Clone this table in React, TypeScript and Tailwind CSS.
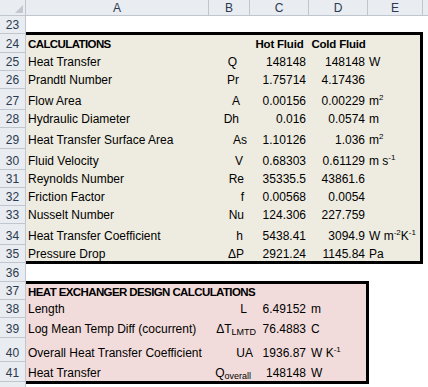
import React from 'react';

// Excel-style sheet: rows 23-42, columns A-E, two bordered calculation blocks

const headBg = 'bg-[#e9ecf0]';
const headLine = 'border-[#c0c6ce]';

const rowNums: { n: number; cls: string; hide?: boolean }[] = [
  { n: 23, cls: 'h-[18px]' },
  { n: 24, cls: 'h-[19px]' },
  { n: 25, cls: 'h-[18px]' },
  { n: 26, cls: 'h-[18px]' },
  { n: 27, cls: 'h-[21px]' },
  { n: 28, cls: 'h-[18px]' },
  { n: 29, cls: 'h-[21px]' },
  { n: 30, cls: 'h-[21px]' },
  { n: 31, cls: 'h-[18px]' },
  { n: 32, cls: 'h-[18px]' },
  { n: 33, cls: 'h-[18px]' },
  { n: 34, cls: 'h-[21px]' },
  { n: 35, cls: 'h-[18px]' },
  { n: 36, cls: 'h-[19px]' },
  { n: 37, cls: 'h-[18px]' },
  { n: 38, cls: 'h-[18px]' },
  { n: 39, cls: 'h-[20px]' },
  { n: 40, cls: 'h-[24px]' },
  { n: 41, cls: 'h-[20px]' },
  { n: 42, cls: 'h-[20px]', hide: true },
];

const Sup = ({ children }: { children: React.ReactNode }) => (
  <sup className="text-[8px] -top-[5px]">{children}</sup>
);

const Sub = ({ children }: { children: React.ReactNode }) => (
  <sub className="text-[9px] -bottom-[2px]">{children}</sub>
);

type CalcRow = {
  rowCls: string;
  label: string;
  sym: React.ReactNode;
  symCls: string;
  hot: string;
  cold: string;
  unit?: React.ReactNode;
};

const calcRows: CalcRow[] = [
  { rowCls: 'h-[18px] pb-[2px]', label: 'Heat Transfer', sym: 'Q', symCls: 'pr-[13px]', hot: '148148', cold: '148148', unit: 'W' },
  { rowCls: 'h-[18px] pb-[2px]', label: 'Prandtl Number', sym: 'Pr', symCls: 'pr-[11px]', hot: '1.75714', cold: '4.17436' },
  { rowCls: 'h-[21px] pb-[2px]', label: 'Flow Area', sym: 'A', symCls: 'pr-[10px]', hot: '0.00156', cold: '0.00229', unit: <>m<Sup>2</Sup></> },
  { rowCls: 'h-[18px] pb-[2px]', label: 'Hydraulic Diameter', sym: 'Dh', symCls: 'pr-[11px]', hot: '0.016', cold: '0.0574', unit: 'm' },
  { rowCls: 'h-[21px] pb-[2px]', label: 'Heat Transfer Surface Area', sym: 'As', symCls: 'pr-[3px]', hot: '1.10126', cold: '1.036', unit: <>m<Sup>2</Sup></> },
  { rowCls: 'h-[21px] pb-[2px]', label: 'Fluid Velocity', sym: 'V', symCls: 'pr-[7px]', hot: '0.68303', cold: '0.61129', unit: <>m s<Sup>-1</Sup></> },
  { rowCls: 'h-[18px] pb-[2px]', label: 'Reynolds Number', sym: 'Re', symCls: 'pr-[6px]', hot: '35335.5', cold: '43861.6' },
  { rowCls: 'h-[18px] pb-[2px]', label: 'Friction Factor', sym: 'f', symCls: 'pr-[6px]', hot: '0.00568', cold: '0.0054' },
  { rowCls: 'h-[18px] pb-[2px]', label: 'Nusselt Number', sym: 'Nu', symCls: 'pr-[6px]', hot: '124.306', cold: '227.759' },
  { rowCls: 'h-[21px] pb-[2px]', label: 'Heat Transfer Coefficient', sym: 'h', symCls: 'pr-[7px]', hot: '5438.41', cold: '3094.9', unit: <>W m<Sup>-2</Sup>K<Sup>-1</Sup></> },
  { rowCls: 'h-[16px] pb-0', label: 'Pressure Drop', sym: '\u0394P', symCls: 'pr-[6px]', hot: '2921.24', cold: '1145.84', unit: 'Pa' },
];

type DesignRow = {
  rowCls: string;
  label: string;
  sym: React.ReactNode;
  symCls: string;
  value: string;
  unit: React.ReactNode;
};

const designRows: DesignRow[] = [
  { rowCls: 'h-[18px] pb-[2px]', label: 'Length', sym: 'L', symCls: 'mr-[3px]', value: '6.49152', unit: 'm' },
  { rowCls: 'h-[20px] pb-[2px]', label: 'Log Mean Temp Diff (cocurrent)', sym: <>{'\u0394'}T<Sub>LMTD</Sub></>, symCls: '-mr-[6px]', value: '76.4883', unit: 'C' },
  { rowCls: 'h-[24px] pb-[2px]', label: 'Overall Heat Transfer Coefficient', sym: 'UA', symCls: '-mr-[3px]', value: '1936.87', unit: <>W K<Sup>-1</Sup></> },
  { rowCls: 'h-[19px] pb-[1px]', label: 'Heat Transfer', sym: <>Q<Sub>overall</Sub></>, symCls: '-mr-[1px]', value: '148148', unit: 'W' },
];

const bold = 'font-bold text-[11.5px] tracking-[-0.6px]';
const boldHead = 'font-bold text-[11.5px] tracking-[-0.2px]';

export default function App() {
  return (
    <div className="w-[428px] h-[387px] overflow-hidden bg-white text-[12px] leading-[14px] text-black font-['Liberation_Sans',Arial,sans-serif]">
      {/* column headers */}
      <div className={`flex h-[16px] border-b ${headLine} ${headBg} text-[#2b3a4f]`}>
        <div className={`relative w-[26px] shrink-0 border-r ${headLine}`}>
          <svg className="absolute right-[2px] bottom-[2px]" width="8" height="8" viewBox="0 0 8 8">
            <polygon points="8,0 8,8 0,8" fill="#c3c8cf" />
          </svg>
        </div>
        {[
          ['A', 'w-[183px]'],
          ['B', 'w-[41px]'],
          ['C', 'w-[59px]'],
          ['D', 'w-[59px]'],
          ['E', 'w-[55px]'],
        ].map(([l, w]) => (
          <div key={l} className={`${w} shrink-0 border-r ${headLine} flex items-center justify-center`}>
            {l}
          </div>
        ))}
        <div className="flex-1" />
      </div>

      <div className="flex">
        {/* row numbers */}
        <div className={`w-[26px] shrink-0 border-r ${headLine} ${headBg} text-[#2b3a4f]`}>
          {rowNums.map((r) => (
            <div key={r.n} className={`${r.cls} border-b ${headLine} flex items-end justify-center pb-[1px]`}>
              {r.hide ? null : r.n}
            </div>
          ))}
        </div>

        {/* sheet */}
        <div className="flex-1 flex flex-col">
          <div className="h-[16px]" />

          {/* CALCULATIONS block */}
          <div className="w-[397px] bg-[#eeece1] border-t-[3px] border-r-[3px] border-b-[3px] border-black">
            <div className="flex items-end h-[18px] pb-[2px]">
              <div className={`w-[183px] shrink-0 pl-[2px] ${bold}`}>CALCULATIONS</div>
              <div className="w-[41px] shrink-0" />
              <div className={`w-[59px] shrink-0 text-center whitespace-nowrap ${boldHead}`}>Hot Fluid</div>
              <div className={`w-[59px] shrink-0 text-center whitespace-nowrap ${boldHead}`}>Cold Fluid</div>
            </div>
            {calcRows.map((r) => (
              <div key={r.label} className={`flex items-end ${r.rowCls}`}>
                <div className="w-[183px] shrink-0 pl-[2px] whitespace-nowrap">{r.label}</div>
                <div className={`w-[41px] shrink-0 text-right whitespace-nowrap ${r.symCls}`}>{r.sym}</div>
                <div className="w-[59px] shrink-0 text-right pr-[3px]">{r.hot}</div>
                <div className="w-[59px] shrink-0 text-right pr-[3px]">{r.cold}</div>
                <div className="pl-[1px] whitespace-nowrap">{r.unit}</div>
              </div>
            ))}
          </div>

          <div className="h-[17px]" />

          {/* HEAT EXCHANGER DESIGN block */}
          <div className="w-[343px] bg-[#f2dcdb] border-t-[3px] border-r-[3px] border-b-[3px] border-black">
            <div className="flex items-end h-[16px] pb-[1px]">
              <div className={`pl-[2px] whitespace-nowrap ${bold}`}>HEAT EXCHANGER DESIGN CALCULATIONS</div>
            </div>
            {designRows.map((r) => (
              <div key={r.label} className={`flex items-end ${r.rowCls}`}>
                <div className="w-[183px] shrink-0 pl-[2px] whitespace-nowrap">{r.label}</div>
                <div className="w-[41px] shrink-0 flex justify-end">
                  <span className={`whitespace-nowrap ${r.symCls}`}>{r.sym}</span>
                </div>
                <div className="w-[59px] shrink-0 text-right pr-[3px]">{r.value}</div>
                <div className="pl-[2px] whitespace-nowrap">{r.unit}</div>
              </div>
            ))}
          </div>
        </div>
      </div>
    </div>
  );
}
